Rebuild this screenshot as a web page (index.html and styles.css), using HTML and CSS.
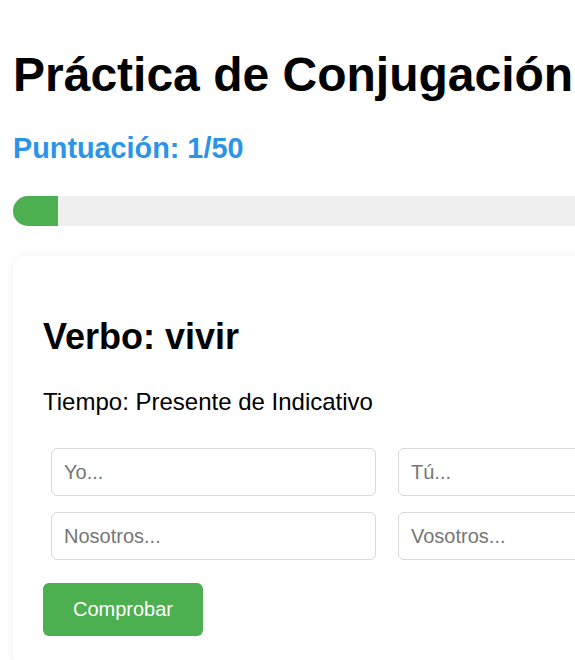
FILE: index.html
```html
<!DOCTYPE html>
<html lang="es">
<head>
<meta charset="utf-8">
<title>Práctica de Conjugación</title>
<link rel="stylesheet" href="styles.css">
</head>
<body>
<main class="page">
  <h1 class="title">Práctica de Conjugación</h1>
  <div class="score">Puntuación: 1/50</div>
  <div class="progress"><div class="progress-fill"></div></div>
  <section class="card">
    <h2 class="verb">Verbo: vivir</h2>
    <p class="tense">Tiempo: Presente de Indicativo</p>
    <div class="inputs">
      <input class="field" type="text" placeholder="Yo...">
      <input class="field" type="text" placeholder="Tú...">
      <input class="field" type="text" placeholder="Nosotros...">
      <input class="field" type="text" placeholder="Vosotros...">
    </div>
    <button class="check" type="button">Comprobar</button>
  </section>
</main>
</body>
</html>
```
FILE: styles.css
```css
html, body {
  margin: 0;
  padding: 0;
  background: #fff;
  overflow: hidden;
}
body {
  font-family: "Liberation Sans", Arial, sans-serif;
  color: #000;
}
.page {
  display: flex;
  flex-direction: column;
  align-items: flex-start;
  padding: 0 0 0 13px;
  width: 800px;
}
.title {
  margin: 47px 0 0 0;
  font-size: 48px;
  line-height: 56px;
  font-weight: bold;
  white-space: nowrap;
}
.score {
  margin-top: 28px;
  font-size: 28.8px;
  line-height: 34px;
  font-weight: bold;
  color: #2b94e8;
}
.progress {
  margin-top: 31px;
  width: 760px;
  height: 30px;
  border-radius: 15px;
  background: #efefef;
  overflow: hidden;
}
.progress-fill {
  width: 45px;
  height: 100%;
  background: #4caf50;
}
.card {
  margin-top: 30px;
  width: 760px;
  box-sizing: border-box;
  padding: 30px;
  background: #fff;
  border-radius: 12px;
  box-shadow: 0 1px 10px rgba(0, 0, 0, 0.07);
  display: flex;
  flex-direction: column;
  align-items: flex-start;
}
.verb {
  margin: 30px 0 0 0;
  font-size: 36px;
  line-height: 42px;
  font-weight: bold;
}
.tense {
  margin: 30px 0 0 0;
  font-size: 24px;
  line-height: 28px;
}
.inputs {
  margin: 32px 0 0 8px;
  display: grid;
  grid-template-columns: 325px 325px;
  column-gap: 22px;
  row-gap: 16px;
}
.field {
  box-sizing: border-box;
  width: 100%;
  height: 48px;
  padding: 0 12px;
  border: 1px solid #d9d9d9;
  border-radius: 6px;
  font-family: "Liberation Sans", Arial, sans-serif;
  font-size: 20px;
  color: #222;
  background: #fff;
}
.field::placeholder {
  color: #767676;
}
.check {
  margin-top: 23px;
  width: 160px;
  height: 53px;
  border: none;
  border-radius: 6px;
  background: #4caf50;
  color: #fff;
  font-family: "Liberation Sans", Arial, sans-serif;
  font-size: 20px;
  padding: 0;
}
```
